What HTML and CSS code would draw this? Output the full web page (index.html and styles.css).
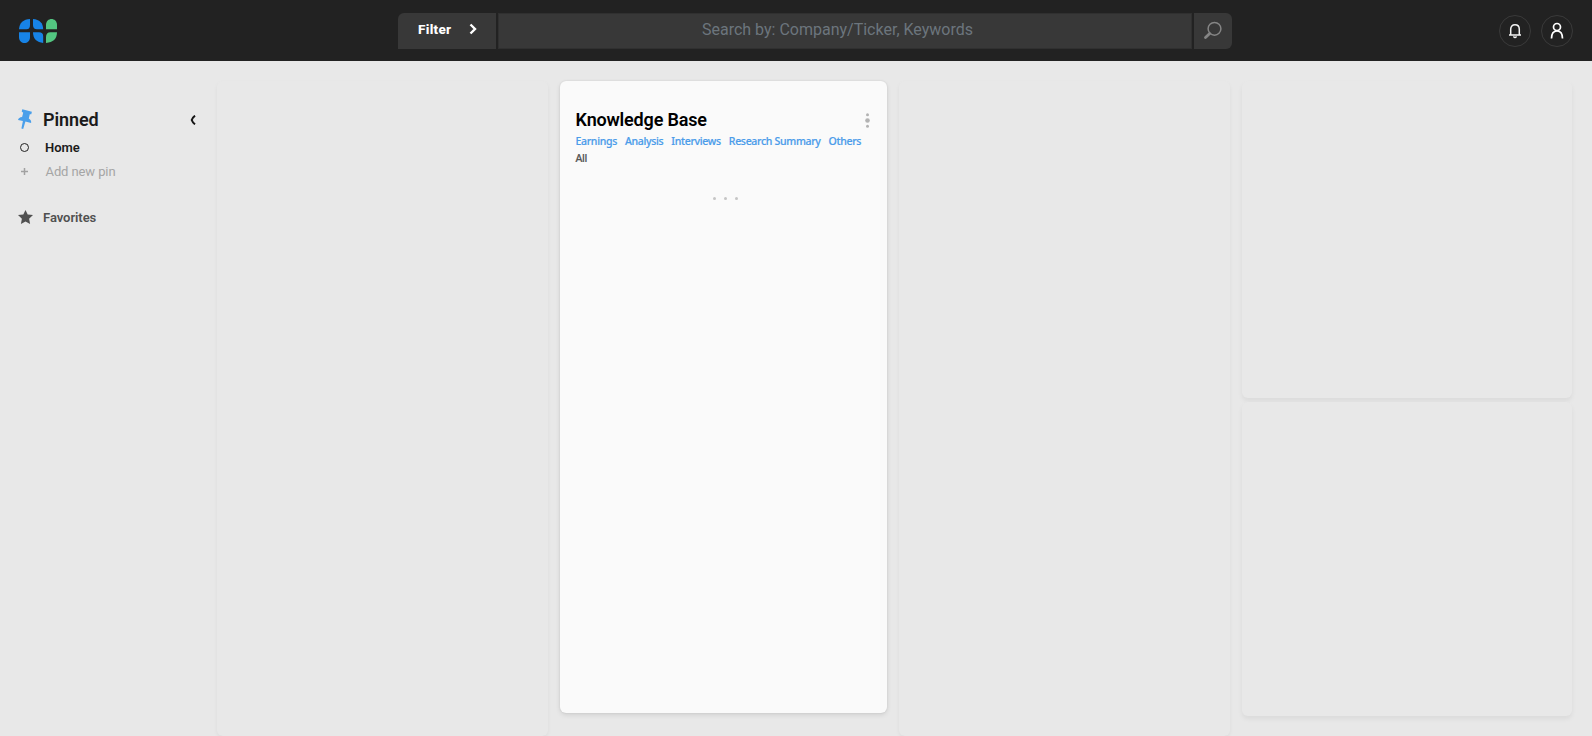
FILE: index.html
```html
<!DOCTYPE html>
<html lang="en">
<head>
<meta charset="utf-8">
<title>Knowledge Base</title>
<link rel="stylesheet" href="styles.css">
</head>
<body>
<header class="topbar">
  <svg class="logo" width="38" height="24" viewBox="0 0 38 24">
    <g fill="#1783e6">
      <path d="M0 10.200C.3 4 4.500.2 11 0v6Q11 10.200 7.500 10.200z"/>
      <path d="M14 0c6.500.4 10 4 10.200 10.200H18Q14 10.200 14 6z"/>
      <path d="M0 13.300h11V18c0 8-11 8-11 0z"/>
      <path d="M14 13.300h6Q24.200 13.300 24.200 17.500V24C18 23.500 14 20 14 13.300z"/>
    </g>
    <g fill="#53c681">
      <path d="M27 10.200V6c0-8 11-8 11 0v4.200z"/>
      <path d="M38 13.300C38 20 34 23.500 27 24v-6Q27 13.300 31.500 13.300z"/>
    </g>
  </svg>
  <div class="search">
    <button class="filter">Filter
      <svg class="filter-arrow" width="8" height="12" viewBox="0 0 8 12"><path d="M1.500 1.500 6 6l-4.500 4.500" fill="none" stroke="#fff" stroke-width="2.400"/></svg>
    </button>
    <div class="query">Search by: Company/Ticker, Keywords</div>
    <button class="go">
      <svg width="20" height="20" viewBox="0 0 20 20" fill="none" stroke="#858585"><circle cx="11.500" cy="7.800" r="6.400" stroke-width="1.500"/><path d="m6.700 12.600-4.200 4" stroke-width="2.800" stroke-linecap="round"/></svg>
    </button>
  </div>
  <nav class="actions">
    <a class="round"><svg width="14" height="16" viewBox="0 0 14 16" fill="none" stroke="#f5f5f5" stroke-width="1.500"><path d="M2.700 11.500V6.300C2.700 3.500 4.300 1.800 7 1.800s4.300 1.700 4.300 4.500v5.200M1 12h12M5.500 13.300Q7 15.800 8.500 13.300"/></svg></a>
    <a class="round"><svg width="14" height="17" viewBox="0 0 14 17" fill="none" stroke="#fff" stroke-width="1.700"><circle cx="7" cy="5" r="3.500"/><path d="M1.500 16.500C1.500 11.500 3.800 9 7 9s5.500 2.500 5.500 7.500"/></svg></a>
  </nav>
</header>
<div class="workspace">
  <aside class="sidebar">
    <div class="pinned">
      <svg class="pin" width="16" height="21" viewBox="0 0 16 21" fill="#4a9fea"><path d="m4.300.3 9.600 2.400-.6 2.500-1.500.1-1 4.200c1.900 1.200 2.800 2.700 2.300 4.400L7.400 12.600 5.200 20l-1.800-.4 1.500-7.600L0 11c.5-1.700 1.700-2.700 4.100-2.900l1.100-4.300L3.700 2.600z"/></svg>
      <h2 class="pinned-title">Pinned</h2>
      <svg class="collapse" width="6" height="10" viewBox="0 0 6 10"><path d="M5 .7Q2.600 2.500 1.700 5q.9 2.500 3.300 4.300" fill="none" stroke="#151515" stroke-width="2"/></svg>
    </div>
    <div class="item home"><span class="ring"></span>Home</div>
    <div class="item add"><svg class="plus" width="7" height="7" viewBox="0 0 7 7"><path d="M3.500 0v7M0 3.500h7" stroke="#a1a1a1" stroke-width="1.500"/></svg>Add new pin</div>
    <div class="favorites">
      <svg class="star" width="15" height="14" viewBox="0 0 15 14"><path fill="#505050" d="m7.500 0 2.200 4.500 5.300.6-3.900 3.700 1 5.200-4.600-2.500L2.900 14l1-5.200L0 5.100l5.300-.6z"/></svg>Favorites
    </div>
  </aside>
  <main class="board">
    <section class="panel"></section>
    <section class="panel card">
      <div class="card-head">
        <h2 class="card-title">Knowledge Base</h2>
        <svg class="more" width="5" height="15" viewBox="0 0 5 15" fill="#b3b3b3"><circle cx="2.500" cy="1.700" r="1.500"/><circle cx="2.500" cy="7.500" r="2.300"/><circle cx="2.500" cy="13.300" r="1.500"/></svg>
      </div>
      <div class="tabs">
        <a class="tab">Earnings</a><a class="tab">Analysis</a><a class="tab">Interviews</a><a class="tab">Research Summary</a><a class="tab">Others</a><a class="tab current">All</a>
      </div>
      <div class="loader"><i class="dot"></i><i class="dot"></i><i class="dot"></i></div>
    </section>
    <section class="panel"></section>
    <div class="stack">
      <section class="panel"></section>
      <section class="panel"></section>
    </div>
  </main>
</div>
</body>
</html>
```

FILE: styles.css
```css
* { box-sizing: border-box; }
body { margin: 0; height: 736px; overflow: hidden; background: #e8e8e8; font-family: Roboto, "Liberation Sans", sans-serif; color: #1b1b1b; }
h2 { margin: 0; }
button { border: 0; padding: 0; font-family: inherit; }

.topbar { height: 61px; padding: 0 19px; background: #222; display: grid; grid-template-columns: 379px 834px 1fr; align-items: center; }
.logo { display: block; }
.search { height: 36px; display: grid; grid-template-columns: 98px 696px 38px; column-gap: 1px; }
.filter { display: flex; align-items: center; justify-content: space-between; padding: 0 19px 3px 20px; background: #383838; border-radius: 6px 0 0 0; color: #fff; font-size: 13.5px; font-weight: 800; letter-spacing: .3px; }
.query { margin: 0 1px; border: 1px solid #303030; background: #383838; color: #6c757d; font-size: 16px; line-height: 32px; text-align: center; padding-right: 15px; }
.go { display: flex; align-items: center; justify-content: center; background: #383838; border-radius: 0 6px 6px 0; }
.actions { display: flex; justify-content: flex-end; gap: 10px; }
.round { width: 32px; height: 32px; border: 1px solid #3a3a3a; border-radius: 50%; display: flex; align-items: center; justify-content: center; }

.workspace { display: flex; height: 675px; padding-top: 20px; }
.sidebar { width: 217px; padding: 27px 21px 0 18px; }
.pinned { display: flex; align-items: center; height: 24px; }
.pin { margin: -2px 9px 0 0; }
.pinned-title { font-size: 18px; font-weight: 600; letter-spacing: -.1px; line-height: 24px; flex: 1; }
.item { display: flex; align-items: center; height: 24px; font-size: 13px; }
.home { margin-top: 3px; font-weight: 600; letter-spacing: -.05px; }
.ring { width: 9px; height: 9px; border: 1px solid #222; border-radius: 50%; margin: 1px 16px 0 2px; }
.add { color: #a5a5a5; letter-spacing: -.1px; }
.plus { margin: 0 17.5px 0 3px; }
.favorites { display: flex; align-items: center; height: 20px; margin-top: 24px; font-size: 13px; font-weight: 600; letter-spacing: -.05px; color: #505050; }
.star { margin: -1px 10px 0 0; }

.board { display: grid; grid-template-columns: 331px 327px 331px 330px; column-gap: 12px; align-items: start; }
.panel { height: 655px; border-radius: 6px; background: #e8e8e8; box-shadow: 0 2px 4px rgba(0, 0, 0, .05); }
.card { height: 632px; padding: 26px 15.500px; background: #fafafa; box-shadow: 0 2px 5px rgba(0, 0, 0, .1), 0 0 2px rgba(0, 0, 0, .1); }
.card-head { display: flex; justify-content: space-between; align-items: center; height: 26px; }
.card-title { font-size: 18px; font-weight: 600; letter-spacing: -.18px; line-height: 26px; color: #000; }
.more { margin: 0 2px 0 0; }
.tabs { display: flex; flex-wrap: wrap; column-gap: 8px; margin-right: -8px; }
.tab { font-family: "Noto Sans", sans-serif; font-size: 10.5px; font-weight: 500; letter-spacing: -.31px; line-height: 17px; color: #4b9cea; -webkit-text-stroke: .2px; }
.current { color: #555; }
.loader { display: flex; justify-content: center; gap: 8px; margin: 30px 0 0 3px; }
.dot { width: 3px; height: 3px; border-radius: 50%; background: #c5c5c5; }
.stack { display: grid; grid-template-rows: 317px 314px; row-gap: 4px; }
.stack .panel { height: auto; box-shadow: 0 3px 5px rgba(0, 0, 0, .06); }
```
